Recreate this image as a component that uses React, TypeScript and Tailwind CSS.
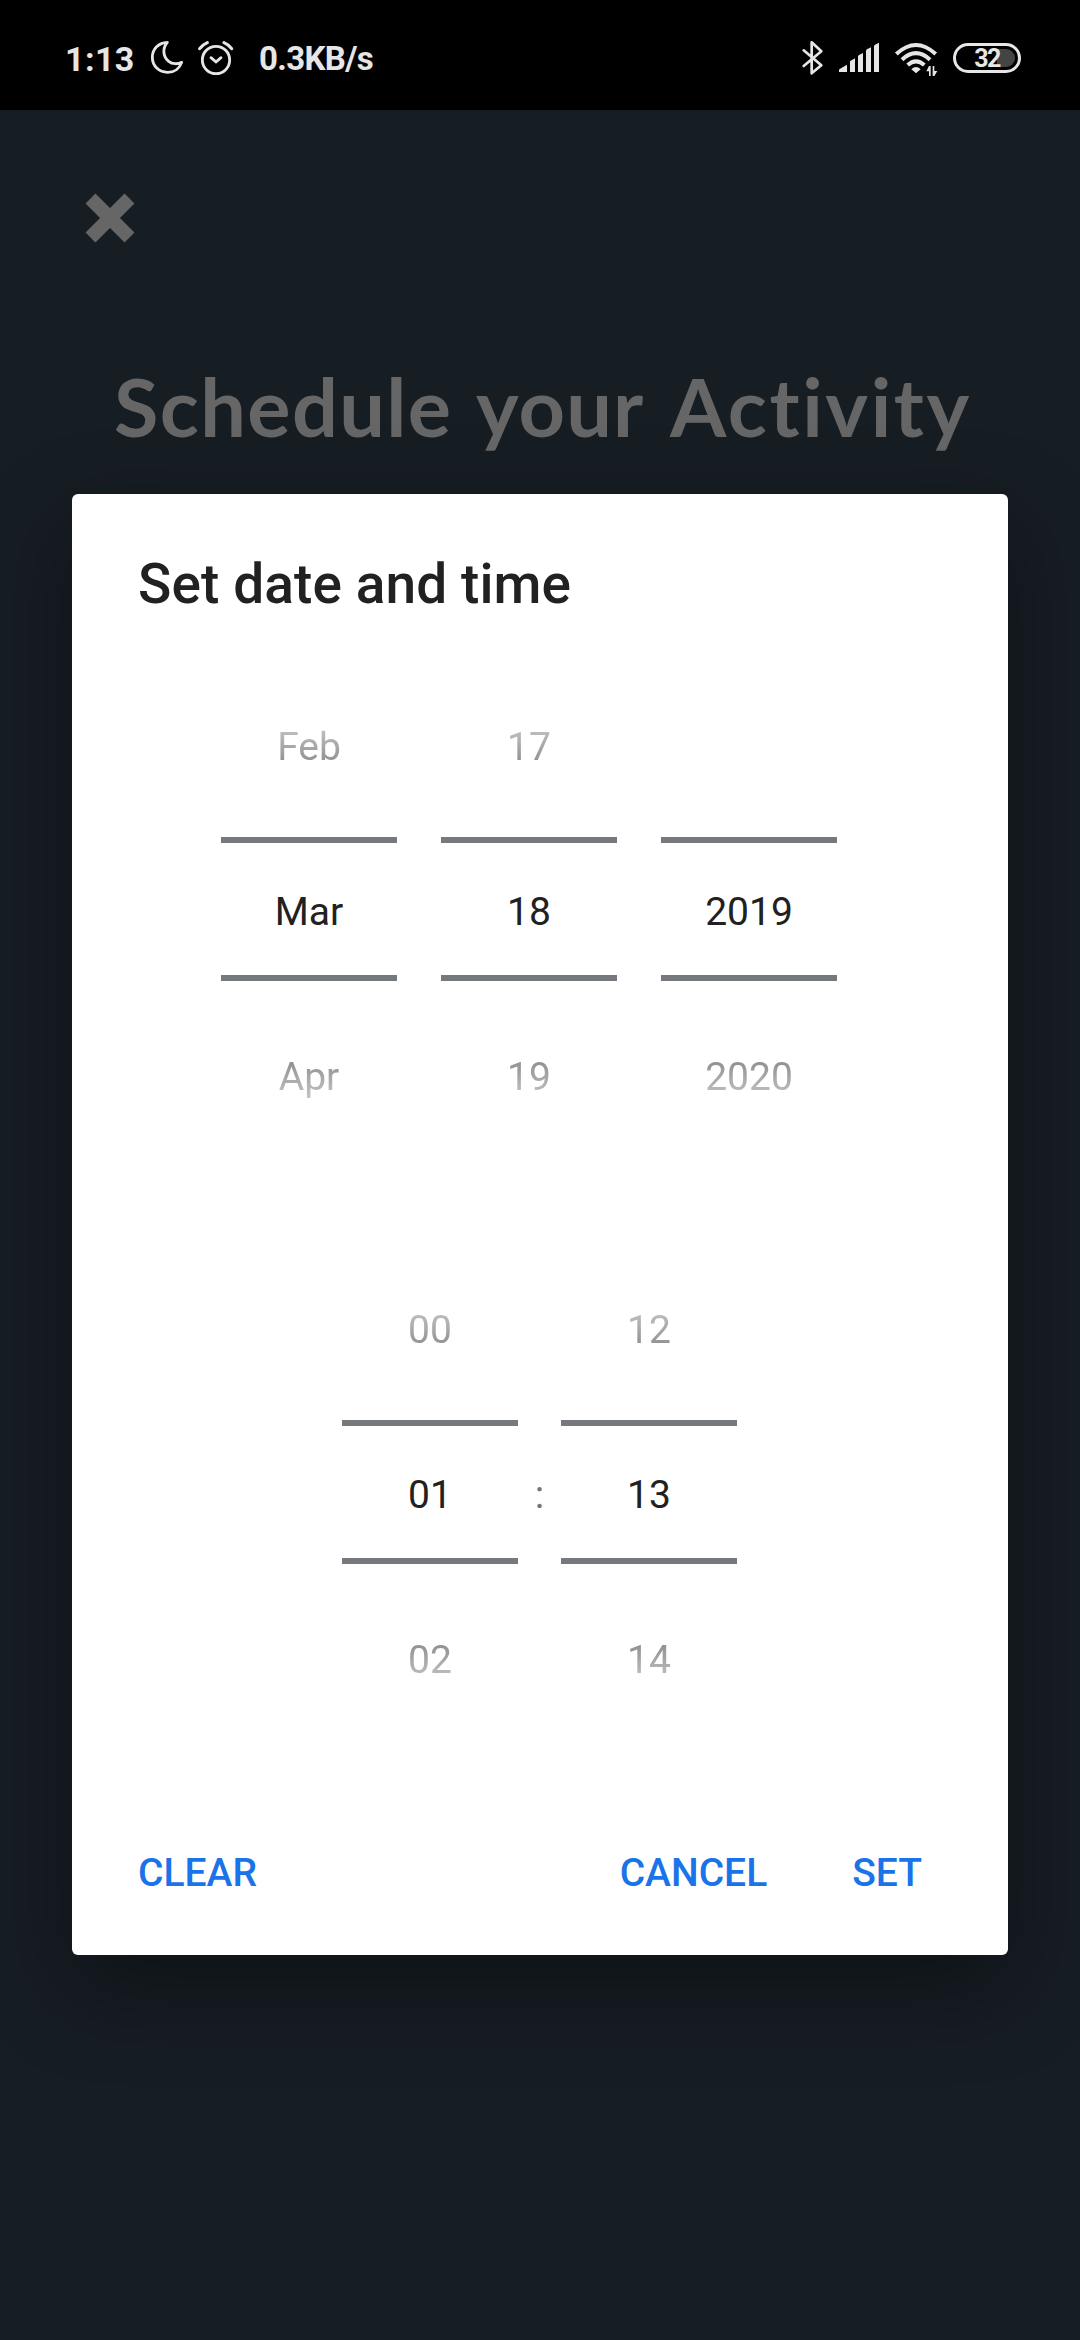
import React from "react";

function Row({ text, kind }: { text: string; kind: "prev" | "current" | "next" }) {
  const tone =
    kind === "current"
      ? "text-[#212121]"
      : kind === "prev"
        ? "text-[#909090] mask-[linear-gradient(to_bottom,transparent_0px,transparent_20px,black_98px)]"
        : "text-[#909090] mask-[linear-gradient(to_bottom,black_66px,transparent_144px)]";
  return <div className={`flex h-[165px] items-center justify-center ${tone}`}>{text}</div>;
}

function Wheel({ values }: { values: [string, string, string] }) {
  return (
    <div className="relative w-[176px] text-[39px] leading-none">
      <Row text={values[0]} kind="prev" />
      <Row text={values[1]} kind="current" />
      <Row text={values[2]} kind="next" />
      <div className="absolute inset-x-0 top-[172px] h-[144px] border-y-[6px] border-[#75787d]" />
    </div>
  );
}

function StatusBar() {
  return (
    <header className="flex h-[110px] items-start bg-black pt-10 text-[#e6e6e6]">
      <span className="ml-[65px] w-[85px] pt-px text-[34px] leading-[36px] font-bold tracking-[0.4px]">1:13</span>
      <svg className="h-9 w-9" viewBox="300 60 108 108" fill="none" stroke="currentColor" strokeWidth="8.5" strokeLinejoin="round">
        <path d="M352 67C326 68 307 87 307 112C307 138 327 157 353 157C373 157 389 145 395 127C384 133 367 133 356 124C338 110 337 84 352 67Z" />
      </svg>
      <svg className="ml-[11px] h-9 w-[37px]" viewBox="441 60 111 108" fill="none" stroke="currentColor" strokeWidth="8.5">
        <circle cx="498" cy="120" r="41" />
        <path d="M483 113L498 126L513 113" strokeWidth="8.5" strokeLinecap="round" />
        <path d="M449 86Q458 74 472 68M545 86Q536 74 522 68" strokeWidth="9.5" strokeLinecap="round" />
      </svg>
      <span className="ml-[25px] pt-px text-[33px] leading-[36px] font-bold tracking-[-0.65px]">0.3KB/s</span>
      <div className="ml-auto flex pr-[59px]">
        <svg className="h-9 w-6" viewBox="60 60 72 108" fill="none" stroke="currentColor" strokeWidth="8" strokeLinecap="round" strokeLinejoin="round">
          <path d="M68 91L121 136L92 160V67L121 94L68 138" />
        </svg>
        <svg className="ml-[12px] h-9 w-[44px]" viewBox="168 60 132 108" fill="currentColor">
          <path d="M174 150Q174 148 176 147L198 134V156H174ZM207 125Q207 123 209 122L222 115V156H207ZM231 110Q231 107 234 105L246 99V156H231ZM255 93Q255 90 258 88L270 82V156H255ZM279 79Q279 76 282 74L294 68V156H279Z" />
        </svg>
        <svg className="ml-[12px] h-9 w-[46px]" viewBox="336 60 138 108">
          <g fill="none" stroke="currentColor" strokeWidth="12">
            <path d="M346 102Q405 48 464 102" />
            <path d="M363 119Q405 80 447 119" />
            <path d="M380 135Q405 113 430 135" />
          </g>
          <path d="M391 148Q405 134 419 148L405 160Z" fill="currentColor" />
          <path d="M444 138H449V168H444V154H436ZM455 138H460V153H469L460 168H455Z" fill="currentColor" />
        </svg>
        <div className="relative mt-[3px] ml-[14px] flex h-[30px] w-[68px] items-center justify-center rounded-full border-[3px] border-[#e6e6e6]">
          <div className="absolute top-[3px] right-[3px] h-[18px] w-[18px] rounded-r-full bg-[#444444]" />
          <span className="relative text-[25px] leading-none font-bold tracking-[-1.5px]">32</span>
        </div>
      </div>
    </header>
  );
}

export default function App() {
  return (
    <div className="relative h-[2340px] w-[1080px] overflow-hidden bg-[#161d23] font-['Roboto',sans-serif]">
      <StatusBar />
      <button aria-label="Close" className="mt-[83px] ml-[85px] block h-[50px] w-[50px] text-[#666666]">
        <svg className="h-full w-full" viewBox="0 0 50 50" stroke="currentColor" strokeWidth="14">
          <path d="M5.5 5.5L44.5 44.5M44.5 5.5L5.5 44.5" />
        </svg>
      </button>
      <h1 className="mt-[113px] flex h-[100px] items-center pl-[114px] font-['Lato',sans-serif] text-[81px] leading-[100px] font-bold whitespace-nowrap text-[#666666]">
        <span className="w-[362px] tracking-[1.4px]">Schedule </span>
        <span className="w-[194px] tracking-[1.1px]">your </span>
        <span className="tracking-[2.6px]">Activity</span>
      </h1>
      <section
        role="dialog"
        className="absolute top-[494px] left-[72px] flex h-[1461px] w-[936px] flex-col rounded-[6px] bg-white shadow-[0_32px_90px_rgba(0,0,0,0.36)]"
      >
        <h2 className="mt-[58px] ml-[66px] h-[64px] text-[55px] leading-[64px] font-medium tracking-[0.1px] text-[#212121]">Set date and time</h2>
        <div className="mt-[49px] ml-[149px] flex gap-11">
          <Wheel values={["Feb", "Mar", "Apr"]} />
          <Wheel values={["17", "18", "19"]} />
          <Wheel values={["", "2019", "2020"]} />
        </div>
        <div className="mt-[88px] ml-[270px] flex items-center">
          <Wheel values={["00", "01", "02"]} />
          <span className="w-[43px] text-center text-[39px] leading-none text-[#757575]">:</span>
          <Wheel values={["12", "13", "14"]} />
        </div>
        <div className="mt-[111px] flex items-center px-[66px] text-[39px] leading-none font-medium text-[#1a73e8]">
          <button>CLEAR</button>
          <button className="mr-[85px] ml-auto">CANCEL</button>
          <button className="mr-[20px]">SET</button>
        </div>
      </section>
    </div>
  );
}
